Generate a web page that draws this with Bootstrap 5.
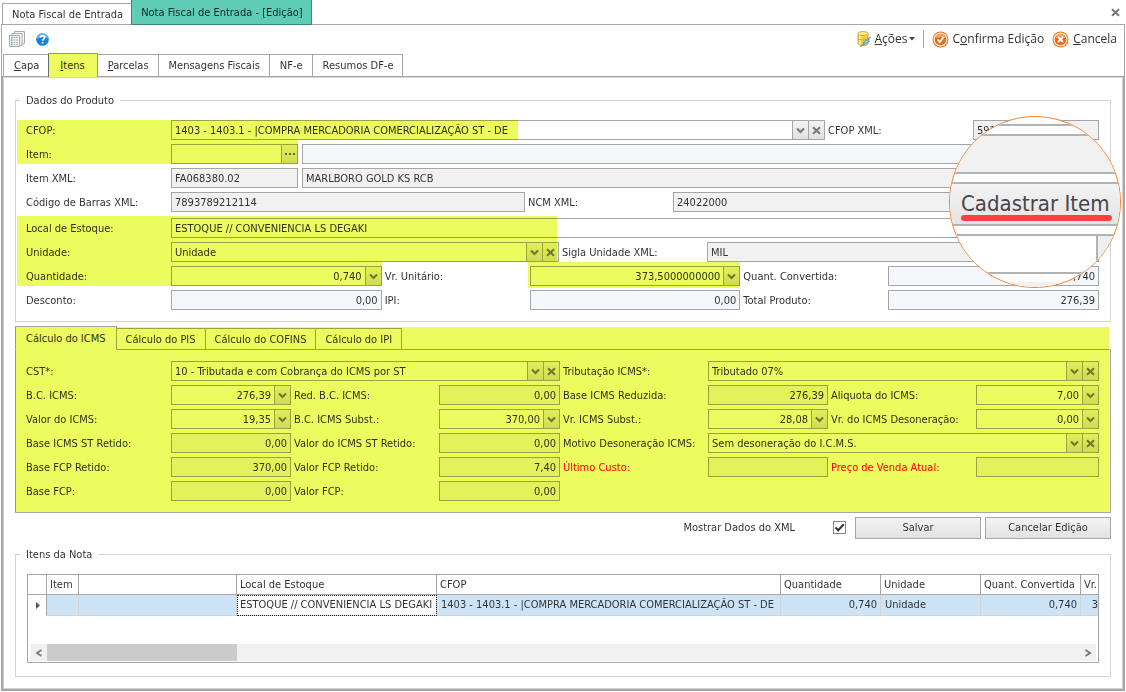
<!DOCTYPE html>
<html lang="pt-BR">
<head>
<meta charset="utf-8">
<meta name="viewport" content="width=device-width, initial-scale=1">
<title>Nota Fiscal de Entrada - [Edição]</title>
<link href="https://cdn.jsdelivr.net/npm/bootstrap@5.3.0/dist/css/bootstrap.min.css" rel="stylesheet">
<style>
:root{--edge:#a6a6a6;--soft:#d4d4d4;--ink:#333;--mark:#ecfb5d;--read:#f1f1f1;--blue:#f4f8fd}
body{font:11px/20px "DejaVu Sans Condensed","DejaVu Sans",sans-serif;color:var(--ink);background:#fff}
button,input,select{font:inherit;color:inherit}
u{text-underline-offset:1px}
.window{margin:0 1px}
/* document tabs */
.doc-tabs{height:24px;padding-left:1px}
.doc-tab{height:21px;border:1px solid var(--edge);border-bottom:0;background:#fff;padding:0 8px 0 9px;line-height:21px}
.doc-tab.on{height:25px;position:relative;padding:0 8px 0 9px;line-height:26px}
.tint{position:relative}
.tint::after{content:"";position:absolute;inset:-1px;background:#5fccb5;mix-blend-mode:multiply;pointer-events:none}
.btn-x{border:0;background:none;padding:0;width:12px;height:24px;margin-right:4px;color:#777}
/* toolbar */
.frame{border:1px solid var(--edge);border-bottom:0}
.tools{height:28px;font:12px/28px "Open Sans","Noto Sans",sans-serif;padding:0 7px}
.tools button{border:0;background:none;padding:0;display:flex;align-items:center;gap:4px}
.tools .rule{width:1px;height:18px;background:#aaa;margin:0 8px}
.left-tools{gap:11px}
.caret{margin-left:-3px}
/* page tabs */
.strip{display:flex;align-items:flex-end}
.strip button{background:#fff;border:1px solid var(--edge);border-left-width:0;height:22px;line-height:21px;padding:0 9px 0 10px}
.strip button:first-child{border-left-width:1px}
.page-strip{height:23px;padding-left:1px}
.page-strip button{border-bottom:0}
.page-strip .on{height:24px;position:relative;margin-bottom:-1px;padding:0 12px 0 11px}
.page-strip .on::after{content:"";position:absolute;inset:-1px -1px 0 -1px;border-left:1px solid var(--edge);background:var(--mark);mix-blend-mode:multiply;pointer-events:none}
.page{border:2px solid var(--edge);border-top-width:1px;box-shadow:inset 0 0 0 1px var(--soft);padding:16px 12px 12px}
/* groups and fields */
.group{position:relative;border:1px solid var(--soft);padding:12px 11px 11px 10px}
.group>legend{float:none;width:auto;margin:0;padding:0 6px 0 0;font-size:11px;line-height:15px;background:#fff;box-shadow:-6px 0 #fff}
.group-grid{padding-bottom:13px}
.stack{display:grid;gap:4px}
.line{display:grid;position:relative}
.line>label,.tax>label{padding-left:3px;white-space:nowrap;height:20px;line-height:22px}
.line>label:first-child,.tax>.lead0{padding-left:0}
.c-cfop{grid-template-columns:145px 1fr 148px 126px}
.c-item{grid-template-columns:145px 127px 4px 1fr}
.c-bar{grid-template-columns:145px 354fr 148px 426fr}
.c-one{grid-template-columns:145px 1fr;margin-top:2px}
.c-unit{grid-template-columns:145px 388fr 148px 392fr}
.c-qty{grid-template-columns:145px 1fr 148px 1fr 148px 1fr}
.tax{display:grid;gap:4px 0;grid-template-columns:145px 120fr 148px 121fr 148px 120fr 148px 123fr}
.wide{grid-column:span 3}
.box{display:flex;height:20px;min-width:0;border:1px solid var(--edge);background:#fff}
.box input,.box select{flex:1;min-width:0;border:0;background:none;padding:1px 3px 0;height:18px;line-height:17px;outline:0;appearance:none;border-radius:0}
.box.num input{text-align:right}
.box.ro{background:var(--read)}
.tax .ro{background:#f6f6f6}
.box.bl{background:var(--blue)}
.box button{width:16px;flex:none;border:0;border-left:1px solid var(--edge);background:linear-gradient(#f3f3f3,#e0e0e0);padding:0;display:flex;align-items:center;justify-content:center;color:#777}
/* highlighter: sits over a grid area of its line */
.hl{position:absolute;background:var(--mark);mix-blend-mode:multiply;pointer-events:none;inset:0 0 0 -9px;grid-column:1/3;grid-row:1}
.hl-text{right:auto;width:501px}
.hl-next{inset:-4px 0 0 -9px}
.hl-two{inset:-26px 2px 0 -9px}
.hl-cell{grid-column:4/5;inset:-4px 0 -2px -2px}
/* magnifier */
.lens{position:absolute;right:-11px;top:8px;width:172px;height:172px;border:1px solid #f58634;border-radius:50%;overflow:hidden;background:#fff;padding-top:7px}
.lens div{border:2px solid #b3b3b3;border-width:2px 0;margin-bottom:8px;background:#fff}
.lens .l-gap{height:12px;margin-bottom:0}
.lens .l-ro{height:38px;background:#f1f1f1;border-top:0}
.lens button{display:block;width:100%;height:44px;border:2px solid #b3b3b3;border-width:2px 0;background:linear-gradient(#f3f3f3,#e4e4e4);font-size:22px;line-height:40px;padding:0 0 0 11px;text-align:left;white-space:nowrap;margin-bottom:8px;position:relative;color:#45454d}
.lens button::after{content:"";position:absolute;left:11px;right:8px;bottom:3px;height:6px;border-radius:3px;background:#ff4040}
.lens .l-box{height:40px;display:flex;justify-content:flex-end}
.lens .l-box::after{content:"";width:24px;border-left:2px solid #b3b3b3;background:#eee}
/* tax panel */
.taxes{position:relative;margin-top:4px}
.taxes .strip{height:23px}
.taxes .strip button{margin-bottom:-1px;padding:0 9px}
.taxes .strip .on{height:24px;padding:0 10px;border-bottom-color:#fff}
.panel{border:1px solid var(--edge);padding:11px 11px 11px 10px}
.taxes .strip .on{position:relative}
.taxes>.hl{inset:1px 2px 1px 0}
.red{color:#f00}
.taxes .red{position:relative;z-index:2}
.act{height:22px;width:126px;border:1px solid var(--edge);border-radius:0;background:linear-gradient(#f3f3f3,#e2e2e2);padding:0;line-height:20px}
.actions{margin:4px 0 8px}
.tick{appearance:none;width:13px;height:13px;border:1px solid #888;margin:0 9px 2px 38px;background:#fff}
.tick:checked{background:#fff url("data:image/svg+xml,%3Csvg xmlns='http://www.w3.org/2000/svg' viewBox='0 0 11 11'%3E%3Cpath d='M1.5 5.5 4.2 8.3 9.8 2.3' fill='none' stroke='%23333' stroke-width='2'/%3E%3C/svg%3E")}
/* item grid */
.sheet{border:1px solid var(--edge);height:89px;overflow:hidden;display:flex;flex-direction:column;justify-content:space-between;margin-left:1px}
.sheet table{table-layout:fixed;width:100%;border-collapse:separate;border-spacing:0}
.sheet th,.sheet td{padding:0 3px;font-weight:400;white-space:nowrap;border-right:1px solid var(--edge);border-bottom:1px solid var(--edge);height:20px;line-height:19px}
.sheet td{background:#cde4f7;border-color:var(--soft);line-height:20px;height:21px;padding-left:4px}
.sheet td:first-child{background:#fff;border-right-color:var(--edge);border-bottom-color:#fff;padding-left:8px}
.sheet th:last-child,.sheet td:last-child{border-right:0;padding-right:0}
.sheet td.focus{background:#fff;outline:1px dotted #222;outline-offset:-1px;padding-left:3px}
.w-mark{width:19px}.w-item{width:32px}.w-name{width:158px}.w-loc{width:200px}.w-cfop{width:344px}.w-num{width:100px}
.scroller{display:flex;height:17px;margin:0 2px 1px;background:#f0f0f0}
.scroller button{border:0;background:none;width:17px;padding:0;display:flex;align-items:center;justify-content:center;color:#777}
.thumb{width:190px;background:#cbcbcb}
</style>
</head>
<body>
<svg width="0" height="0" class="position-absolute" aria-hidden="true">
  <symbol id="v" viewBox="0 0 9 9"><path d="M1 2.500 4.500 6 8 2.500" fill="none" stroke="currentColor" stroke-width="2"/></symbol>
  <symbol id="x" viewBox="0 0 9 9"><path d="M1 1.200 8 7.800M8 1.200 1 7.800" fill="none" stroke="currentColor" stroke-width="2"/></symbol>
  <symbol id="orb" viewBox="0 0 17 17"><circle cx="8.500" cy="8.500" r="8" fill="#e8731c"/><circle cx="8.500" cy="8.500" r="7" fill="#fff0dd"/><circle cx="8.500" cy="8.500" r="5.800" fill="#ea6a12"/><path d="M3.600 7a5 5 0 0 1 9.800 0q-5-1.600-9.800 0Z" fill="#f7a35c"/></symbol>
</svg>

<div class="window">
<header class="doc-tabs d-flex align-items-end justify-content-between">
  <nav class="d-flex align-items-end" aria-label="Documentos">
    <button class="doc-tab border-end-0" type="button">Nota Fiscal de Entrada</button>
    <button class="doc-tab on tint align-self-start" type="button">Nota Fiscal de Entrada - [Edição]</button>
  </nav>
  <button class="btn-x" type="button" aria-label="Fechar"><svg width="9" height="9"><use href="#x"/></svg></button>
</header>

<div class="frame">
  <div class="tools d-flex align-items-center justify-content-between">
    <div class="left-tools d-flex align-items-center">
      <button type="button" aria-label="Documentos"><svg width="16" height="16" viewBox="0 0 16 16"><g fill="#f6f6f6" stroke="#aaa"><path d="M5.500.500h10v12h-10z"/><path d="M3 2.500h10v12H3z"/><path d="M.500 4.500h10v11H.500z"/></g><path d="M2 6.500h1.500M2 9h1.500M2 11.500h1.500M2 13.700h1.500" stroke="#3ea0dc" stroke-width="1.300"/><path d="M4.500 6.500H9M4.500 9H9M4.500 11.500H9M4.500 13.700H9" stroke="#aaa" stroke-dasharray="2 .6"/></svg></button>
      <button type="button" aria-label="Ajuda"><svg width="13" height="13" viewBox="0 0 13 13"><circle cx="6.500" cy="6.500" r="6.300" fill="#1583dc"/><path d="M1 5.500a5.500 5.500 0 0 1 11 0q-5.500-2.500-11 0Z" fill="#65bbf5"/><path d="M4.300 4.700q.2-1.900 2.200-1.900t2.200 1.700q0 1-1.100 1.700-.9.500-.9 1.600M6.600 9v1.500" fill="none" stroke="#fff" stroke-width="1.700"/></svg></button>
    </div>
    <div class="d-flex align-items-center">
      <button type="button"><svg width="14" height="16" viewBox="0 0 14 16"><path d="M1 2.500v10c0 2.700 10 2.700 10 0v-10" fill="#f4cf3c" stroke="#c99a1c" stroke-width=".8"/><path d="M3 4v9.500" stroke="#fff3a8" stroke-width="1.600"/><ellipse cx="6" cy="2.500" rx="5" ry="2" fill="#ffed93" stroke="#c99a1c" stroke-width=".8"/><path d="M1.200 7.500c1 1.800 8.600 1.800 9.600 0" fill="none" stroke="#d7a825"/><path d="m3.500 15.500 4-3.600-1.500-.4L13.500 6l-2.800 4 2 .4z" fill="#9dcdf0" stroke="#3d83bd" stroke-width=".7"/></svg><span><u>A</u>ções</span><svg class="caret" width="6" height="4" viewBox="0 0 6 4"><path d="M0 0h6L3 3.500z" fill="#444"/></svg></button>
      <span class="rule"></span>
      <button type="button" class="me-2"><svg width="17" height="17" viewBox="0 0 17 17"><use href="#orb"/><path d="m5.500 8.500 2.300 2.500 3.800-5" fill="none" stroke="#fff" stroke-width="1.800"/></svg><span>C<u>o</u>nfirma Edição</span></button>
      <button type="button"><svg width="17" height="17" viewBox="0 0 17 17"><use href="#orb"/><path d="m6 6 5 5m0-5-5 5" stroke="#fff" stroke-width="1.800"/></svg><span><u>C</u>ancela</span></button>
    </div>
  </div>
  <nav class="strip page-strip" aria-label="Seções">
    <button type="button"><u>C</u>apa</button>
    <button type="button" class="on"><u>I</u>tens</button>
    <button type="button"><u>P</u>arcelas</button>
    <button type="button">Mensagens Fiscais</button>
    <button type="button">NF-e</button>
    <button type="button">Resumos DF-e</button>
  </nav>
</div>

<main class="page">
  <fieldset class="group">
    <legend>Dados do Produto</legend>
    <div class="stack">
      <div class="line c-cfop">
        <label for="cfop">CFOP:</label>
        <div class="box"><select id="cfop"><option>1403 - 1403.1 - |COMPRA MERCADORIA COMERCIALIZAÇÃO ST - DE</option></select><button type="button" aria-label="Abrir"><svg width="9" height="9"><use href="#v"/></svg></button><button type="button" aria-label="Limpar"><svg width="9" height="9"><use href="#x"/></svg></button></div>
        <label for="cfopx">CFOP XML:</label>
        <div class="box ro"><input id="cfopx" value="5910" readonly></div>
        <span class="hl hl-text"></span>
      </div>
      <div class="line c-item">
        <label for="item">Item:</label>
        <div class="box"><input id="item"><button type="button" aria-label="Procurar"><svg width="10" height="2" viewBox="0 0 10 2"><path d="M0 0h2v2H0zM4 0h2v2H4zM8 0h2v2H8z" fill="#666"/></svg></button></div>
        <span></span>
        <div class="box bl"><input aria-label="Descrição do item" readonly></div>
        <span class="hl hl-next"></span>
      </div>
      <div class="line c-item">
        <label for="itemx">Item XML:</label>
        <div class="box ro"><input id="itemx" value="FA068380.02" readonly></div>
        <span></span>
        <div class="box ro"><input aria-label="Descrição XML" value="MARLBORO GOLD KS RCB" readonly></div>
      </div>
      <div class="line c-bar">
        <label for="ean">Código de Barras XML:</label>
        <div class="box ro"><input id="ean" value="7893789212114" readonly></div>
        <label for="ncm">NCM XML:</label>
        <div class="box ro"><input id="ncm" value="24022000" readonly></div>
      </div>
      <div class="line c-one">
        <label for="loc">Local de Estoque:</label>
        <div class="box"><input id="loc" value="ESTOQUE // CONVENIENCIA LS DEGAKI"></div>
      </div>
      <div class="line c-unit">
        <label for="uni">Unidade:</label>
        <div class="box"><select id="uni"><option>Unidade</option></select><button type="button" aria-label="Abrir"><svg width="9" height="9"><use href="#v"/></svg></button><button type="button" aria-label="Limpar"><svg width="9" height="9"><use href="#x"/></svg></button></div>
        <label for="sig">Sigla Unidade XML:</label>
        <div class="box ro"><input id="sig" value="MIL" readonly></div>
        <span class="hl hl-two"></span>
      </div>
      <div class="line c-qty">
        <label for="qtd">Quantidade:</label>
        <div class="box num"><input id="qtd" value="0,740"><button type="button" aria-label="Calcular"><svg width="9" height="9"><use href="#v"/></svg></button></div>
        <label for="vru">Vr. Unitário:</label>
        <div class="box num"><input id="vru" value="373,5000000000"><button type="button" aria-label="Calcular"><svg width="9" height="9"><use href="#v"/></svg></button></div>
        <label for="qcv">Quant. Convertida:</label>
        <div class="box num bl"><input id="qcv" value="0,740" readonly></div>
        <span class="hl hl-next"></span>
        <span class="hl hl-cell"></span>
      </div>
      <div class="line c-qty">
        <label for="desc">Desconto:</label>
        <div class="box num bl"><input id="desc" value="0,00" readonly></div>
        <label for="ipi">IPI:</label>
        <div class="box num bl"><input id="ipi" value="0,00" readonly></div>
        <label for="tot">Total Produto:</label>
        <div class="box num bl"><input id="tot" value="276,39" readonly></div>
      </div>
    </div>
    <div class="lens">
      <div class="l-gap"></div>
      <div class="l-ro"></div>
      <button type="button">Cadastrar Item</button>
      <div class="l-box"></div>
      <div class="l-ro"></div>
    </div>
  </fieldset>

  <section class="taxes">
    <nav class="strip" aria-label="Impostos">
      <button type="button" class="on">Cálculo do ICMS</button>
      <button type="button">Cálculo do PIS</button>
      <button type="button">Cálculo do COFINS</button>
      <button type="button">Cálculo do IPI</button>
    </nav>
    <div class="panel">
      <div class="tax">
        <label class="lead0" for="cst">CST*:</label>
        <div class="box wide"><select id="cst"><option>10 - Tributada e com Cobrança do ICMS por ST</option></select><button type="button" aria-label="Abrir"><svg width="9" height="9"><use href="#v"/></svg></button><button type="button" aria-label="Limpar"><svg width="9" height="9"><use href="#x"/></svg></button></div>
        <label for="tri">Tributação ICMS*:</label>
        <div class="box wide"><select id="tri"><option>Tributado 07%</option></select><button type="button" aria-label="Abrir"><svg width="9" height="9"><use href="#v"/></svg></button><button type="button" aria-label="Limpar"><svg width="9" height="9"><use href="#x"/></svg></button></div>

        <label class="lead0" for="bc">B.C. ICMS:</label>
        <div class="box num"><input id="bc" value="276,39"><button type="button" aria-label="Calcular"><svg width="9" height="9"><use href="#v"/></svg></button></div>
        <label for="red">Red. B.C. ICMS:</label>
        <div class="box num ro"><input id="red" value="0,00" readonly></div>
        <label for="bred">Base ICMS Reduzida:</label>
        <div class="box num ro"><input id="bred" value="276,39" readonly></div>
        <label for="ali">Aliquota do ICMS:</label>
        <div class="box num"><input id="ali" value="7,00"><button type="button" aria-label="Calcular"><svg width="9" height="9"><use href="#v"/></svg></button></div>

        <label class="lead0" for="vic">Valor do ICMS:</label>
        <div class="box num"><input id="vic" value="19,35"><button type="button" aria-label="Calcular"><svg width="9" height="9"><use href="#v"/></svg></button></div>
        <label for="bcs">B.C. ICMS Subst.:</label>
        <div class="box num"><input id="bcs" value="370,00"><button type="button" aria-label="Calcular"><svg width="9" height="9"><use href="#v"/></svg></button></div>
        <label for="vis">Vr. ICMS Subst.:</label>
        <div class="box num"><input id="vis" value="28,08"><button type="button" aria-label="Calcular"><svg width="9" height="9"><use href="#v"/></svg></button></div>
        <label for="vde">Vr. do ICMS Desoneração:</label>
        <div class="box num"><input id="vde" value="0,00"><button type="button" aria-label="Calcular"><svg width="9" height="9"><use href="#v"/></svg></button></div>

        <label class="lead0" for="bst">Base ICMS ST Retido:</label>
        <div class="box num ro"><input id="bst" value="0,00" readonly></div>
        <label for="vst">Valor do ICMS ST Retido:</label>
        <div class="box num ro"><input id="vst" value="0,00" readonly></div>
        <label for="mot">Motivo Desoneração ICMS:</label>
        <div class="box wide"><select id="mot"><option>Sem desoneração do I.C.M.S.</option></select><button type="button" aria-label="Abrir"><svg width="9" height="9"><use href="#v"/></svg></button><button type="button" aria-label="Limpar"><svg width="9" height="9"><use href="#x"/></svg></button></div>

        <label class="lead0" for="bfr">Base FCP Retido:</label>
        <div class="box num ro"><input id="bfr" value="370,00" readonly></div>
        <label for="vfr">Valor FCP Retido:</label>
        <div class="box num ro"><input id="vfr" value="7,40" readonly></div>
        <label class="red" for="ult">Último Custo:</label>
        <div class="box num ro"><input id="ult" readonly></div>
        <label class="red" for="prv">Preço de Venda Atual:</label>
        <div class="box num ro"><input id="prv" readonly></div>

        <label class="lead0" for="bf">Base FCP:</label>
        <div class="box num ro"><input id="bf" value="0,00" readonly></div>
        <label for="vf">Valor FCP:</label>
        <div class="box num ro"><input id="vf" value="0,00" readonly></div>
      </div>
    </div>
    <span class="hl"></span>
  </section>

  <div class="actions d-flex justify-content-end align-items-center">
    <label for="xml">Mostrar Dados do XML</label>
    <input class="tick" type="checkbox" id="xml" checked>
    <button class="act me-1" type="button">Salvar</button>
    <button class="act" type="button">Cancelar Edição</button>
  </div>

  <fieldset class="group group-grid">
    <legend>Itens da Nota</legend>
    <div class="sheet">
      <table>
        <colgroup><col class="w-mark"><col class="w-item"><col class="w-name"><col class="w-loc"><col class="w-cfop"><col class="w-num"><col class="w-num"><col class="w-num"><col></colgroup>
        <thead><tr><th></th><th>Item</th><th></th><th>Local de Estoque</th><th>CFOP</th><th>Quantidade</th><th>Unidade</th><th>Quant. Convertida</th><th>Vr.</th></tr></thead>
        <tbody><tr><td><svg class="d-block" width="4" height="7" viewBox="0 0 4 7"><path d="M0 0v7l4-3.500z" fill="#555"/></svg></td><td></td><td></td><td class="focus">ESTOQUE // CONVENIENCIA LS DEGAKI</td><td>1403 - 1403.1 - |COMPRA MERCADORIA COMERCIALIZAÇÃO ST - DE</td><td class="text-end">0,740</td><td>Unidade</td><td class="text-end">0,740</td><td class="text-end">3</td></tr></tbody>
      </table>
      <div class="scroller">
        <button type="button" aria-label="Rolar à esquerda"><svg width="8" height="8" viewBox="0 0 8 8"><path d="M6.500 1 2 4l4.500 3" fill="none" stroke="currentColor" stroke-width="1.800"/></svg></button>
        <span class="thumb"></span>
        <button class="ms-auto" type="button" aria-label="Rolar à direita"><svg width="8" height="8" viewBox="0 0 8 8"><path d="M1.500 1 6 4 1.500 7" fill="none" stroke="currentColor" stroke-width="1.800"/></svg></button>
      </div>
    </div>
  </fieldset>
</main>
</div>
<script src="https://cdn.jsdelivr.net/npm/bootstrap@5.3.0/dist/js/bootstrap.bundle.min.js"></script>
</body>
</html>
